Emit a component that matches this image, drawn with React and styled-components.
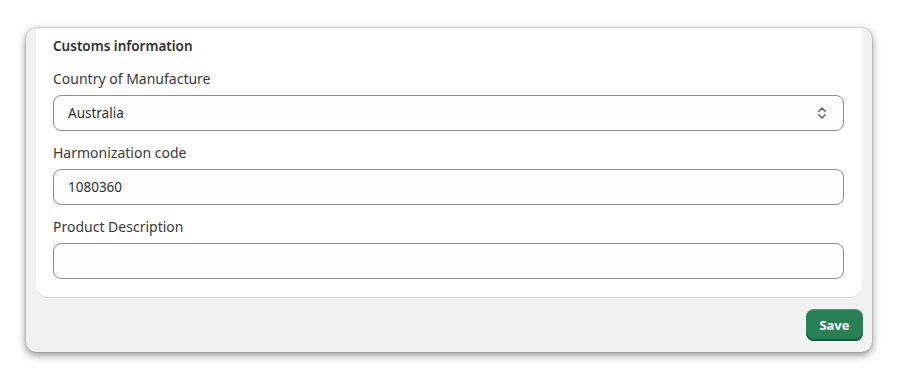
import styled, { createGlobalStyle } from "styled-components";

const GlobalStyle = createGlobalStyle`
  html, body {
    margin: 0;
    padding: 0;
    background: #ffffff;
  }
  body {
    font-family: "Noto Sans", "Open Sans", sans-serif;
    color: #303030;
  }
`;

export default function App() {
    return (
        <Page>
            <GlobalStyle/>
            <Window>
                <Card>
                    <Heading>Customs information</Heading>
                    <Field>
                        <Label>Country of Manufacture</Label>
                        <SelectBox>
                            <span>Australia</span>
                            <svg width="10" height="16" viewBox="0 0 10 16" fill="none">
                                <path d="M1.8 6.2 L5 3 L8.2 6.2" stroke="#5c5c5c" strokeWidth="1.4"
                                      strokeLinecap="round" strokeLinejoin="round"/>
                                <path d="M1.8 9.8 L5 13 L8.2 9.8" stroke="#5c5c5c" strokeWidth="1.4"
                                      strokeLinecap="round" strokeLinejoin="round"/>
                            </svg>
                        </SelectBox>
                    </Field>
                    <Field>
                        <Label>Harmonization code</Label>
                        <TextBox>1080360</TextBox>
                    </Field>
                    <Field>
                        <Label>Product Description</Label>
                        <TextBox/>
                    </Field>
                </Card>
                <Footer>
                    <SaveButton>Save</SaveButton>
                </Footer>
            </Window>
        </Page>
    );
}

const Page = styled.div`
  padding: 28px 28px 31px 26px;
`;

const Window = styled.div`
  width: 846px;
  height: 324px;
  box-sizing: border-box;
  background: #f1f1f1;
  border-radius: 10px;
  box-shadow: 0 3px 9px rgba(0, 0, 0, 0.45), 0 0 2px rgba(0, 0, 0, 0.3);
  padding: 0 10px;
  overflow: hidden;
  display: flex;
  flex-direction: column;
`;

const Card = styled.section`
  background: #ffffff;
  border-radius: 0 0 12px 12px;
  box-shadow: 0 1px 0 #d9d9d9;
  padding: 8px 18px 18px 17px;
  display: flex;
  flex-direction: column;
  gap: 12px;
`;

const Heading = styled.h2`
  margin: 0 0 1px;
  font-size: 13.5px;
  font-weight: 650;
  line-height: 20px;
  color: #303030;
`;

const Field = styled.div`
  display: flex;
  flex-direction: column;
  gap: 6px;
`;

const Label = styled.label`
  font-size: 14px;
  line-height: 20px;
  color: #3a3a3a;
`;

const TextBox = styled.div`
  height: 36px;
  box-sizing: border-box;
  border: 1px solid #8e8e8e;
  border-radius: 8px;
  background: #fdfdfd;
  padding: 0 14px;
  display: flex;
  align-items: center;
  font-size: 13.5px;
  color: #303030;
`;

const SelectBox = styled(TextBox)`
  justify-content: space-between;
  padding-right: 16px;
`;

const Footer = styled.div`
  display: flex;
  justify-content: flex-end;
  padding-top: 12px;
`;

const SaveButton = styled.button`
  width: 57px;
  height: 32px;
  margin-right: -1px;
  border: none;
  border-radius: 8px;
  background: #2a7f57;
  box-shadow: inset 0 -2px 0 #16583a, inset 0 1px 0 rgba(255, 255, 255, 0.2);
  color: #ffffff;
  font-family: "Noto Sans", "Open Sans", sans-serif;
  font-size: 13px;
  font-weight: 700;
  cursor: pointer;
`;
